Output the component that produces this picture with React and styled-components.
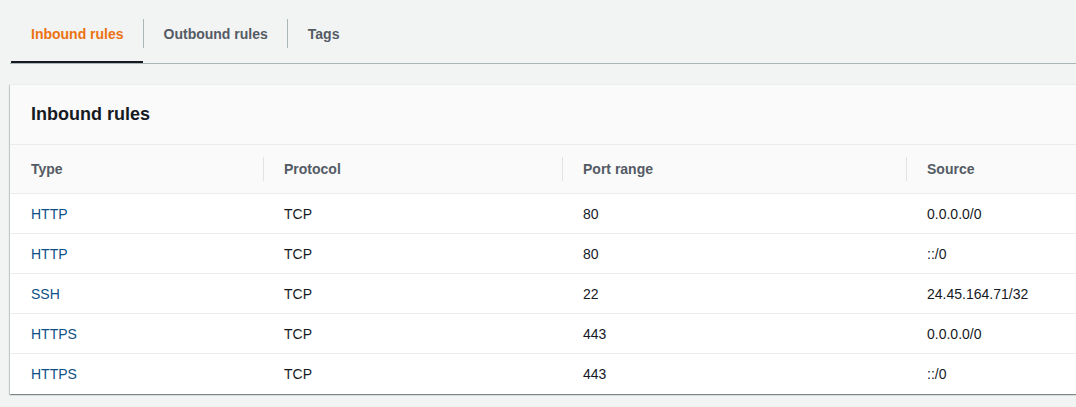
import styled, { createGlobalStyle } from "styled-components"

const GlobalStyle = createGlobalStyle`
    body {
        margin: 0;
        background: #f2f3f3;
        font-family: "Liberation Sans", Arial, sans-serif;
        color: #16191f;
        overflow: hidden;
    }
`

const Page = styled.div`
    padding-left: 10px;
    height: 407px;
    box-sizing: border-box;
`

const TabBar = styled.div`
    display: flex;
    align-items: center;
    height: 64px;
    box-sizing: border-box;
    border-bottom: 1px solid #aab7b8;
    padding-left: 1px;
`

const Tab = styled.div`
    height: 63px;
    box-sizing: border-box;
    display: flex;
    align-items: center;
    padding: 4px 19px 0 20px;
    font-size: 14px;
    font-weight: 700;
    color: ${p => (p.$active ? "#ec7211" : "#545b64")};
    box-shadow: ${p => (p.$active ? "inset 0 -2px 0 #16191f" : "none")};
    cursor: pointer;
`

const TabDivider = styled.div`
    width: 1px;
    height: 29px;
    margin-top: 4px;
    background: #aab7b8;
`

const Panel = styled.div`
    margin-top: 20px;
    width: 1100px;
    background: #ffffff;
    border-top: 1px solid #eaeded;
    box-shadow: 0 1px 1px 0 rgba(0, 28, 36, 0.3), 1px 1px 1px 0 rgba(0, 28, 36, 0.15),
        -1px 1px 1px 0 rgba(0, 28, 36, 0.15);
`

const PanelHeader = styled.div`
    height: 60px;
    box-sizing: border-box;
    display: flex;
    align-items: center;
    padding: 0 21px;
    background: #fafafa;
    border-bottom: 1px solid #eaeded;
`

const Title = styled.h2`
    margin: 0;
    font-size: 18px;
    font-weight: 700;
    color: #16191f;
`

const Row = styled.div`
    display: grid;
    grid-template-columns: 253px 299px 344px 1fr;
    height: ${p => (p.$head ? "49px" : "40px")};
    box-sizing: border-box;
    background: ${p => (p.$head ? "#fafafa" : "#ffffff")};
    border-bottom: 1px solid #eaeded;
    &:last-child {
        border-bottom: none;
    }
`

const HeadCell = styled.div`
    display: flex;
    align-items: center;
    padding: 0 21px;
    font-size: 14px;
    font-weight: 700;
    color: #545b64;
    background: ${p =>
        p.$first ? "none" : "linear-gradient(#e1e4e4, #e1e4e4) left center / 1px 24px no-repeat"};
`

const Cell = styled.div`
    display: flex;
    align-items: center;
    padding: 0 21px;
    font-size: 14px;
    color: ${p => (p.$link ? "#0e5086" : "#16191f")};
`

const rules = [
    { type: "HTTP", protocol: "TCP", port: "80", source: "0.0.0.0/0" },
    { type: "HTTP", protocol: "TCP", port: "80", source: "::/0" },
    { type: "SSH", protocol: "TCP", port: "22", source: "24.45.164.71/32" },
    { type: "HTTPS", protocol: "TCP", port: "443", source: "0.0.0.0/0" },
    { type: "HTTPS", protocol: "TCP", port: "443", source: "::/0" },
]

const App = () => {
  return (
    <Page>
        <GlobalStyle />
        <TabBar>
            <Tab $active>Inbound rules</Tab>
            <TabDivider />
            <Tab>Outbound rules</Tab>
            <TabDivider />
            <Tab>Tags</Tab>
        </TabBar>
        <Panel>
            <PanelHeader>
                <Title>Inbound rules</Title>
            </PanelHeader>
            <Row $head>
                <HeadCell $first>Type</HeadCell>
                <HeadCell>Protocol</HeadCell>
                <HeadCell>Port range</HeadCell>
                <HeadCell>Source</HeadCell>
            </Row>
            {rules.map((r, i) => (
                <Row key={i}>
                    <Cell $link>{r.type}</Cell>
                    <Cell>{r.protocol}</Cell>
                    <Cell>{r.port}</Cell>
                    <Cell>{r.source}</Cell>
                </Row>
            ))}
        </Panel>
    </Page>
  )
}

export default App
